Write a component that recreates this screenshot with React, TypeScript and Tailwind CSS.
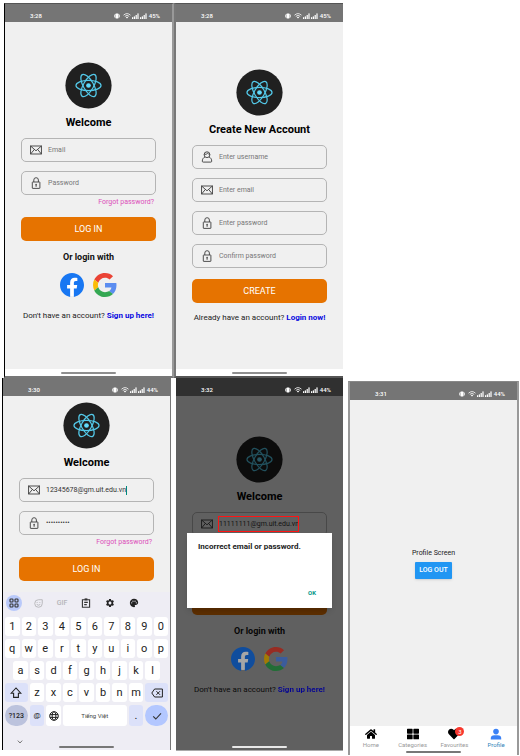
import type { ReactNode } from "react";
import { FaHeart, FaHome, FaThLarge } from "react-icons/fa";
import { MdPalette, MdSettings } from "react-icons/md";

type IconName = "mail" | "lock" | "user";

function StatusBar({ time, battery, dark = false }: { time: string; battery: string; dark?: boolean }) {
  return (
    <header
      className={`flex h-[18px] shrink-0 items-center justify-between pl-[25px] pr-3 pt-[5px] text-[6px] leading-[8px] font-medium text-white ${dark ? "bg-[#303030]" : "bg-[#757575]"}`}
    >
      <span>{time}</span>
      <span className="flex items-center gap-px">
        <svg viewBox="0 0 6 6" className="mr-[2px] size-[6px]" fill="currentColor" aria-hidden="true">
          <rect x="1.4" y="0.4" width="3.2" height="5.2" rx="0.8" />
          <rect x="0.3" y="1.6" width="0.7" height="2.8" />
          <rect x="5" y="1.6" width="0.7" height="2.8" />
        </svg>
        <svg viewBox="0 0 8 6" className="h-[6px] w-[8px]" fill="none" stroke="currentColor" strokeWidth="0.8" aria-hidden="true">
          <path d="M0.5 2.2Q4-1 7.5 2.2M1.8 3.4Q4 1.4 6.2 3.4" />
          <path d="M2.8 4.2L4 5.6 5.2 4.2Q4 3.2 2.8 4.2z" fill="currentColor" stroke="none" />
        </svg>
        <Signal />
        <Signal />
        <span className="pl-px">{battery}</span>
      </span>
    </header>
  );
}

function Signal() {
  return (
    <svg viewBox="0 0 7 6" className="h-[6px] w-[7px]" fill="currentColor" aria-hidden="true">
      <rect x="0" y="4.2" width="1.2" height="1.8" />
      <rect x="1.8" y="3.4" width="1.2" height="2.6" />
      <rect x="3.6" y="2" width="1.2" height="4" />
      <rect x="5.4" y="0.4" width="1.2" height="5.6" />
    </svg>
  );
}

function HomeIndicator({ tone = "bg-[#8f8f8f]" }: { tone?: string }) {
  return <div className={`mx-auto h-[2px] w-1/3 rounded-full ${tone}`} />;
}

function Logo() {
  return (
    <svg viewBox="0 0 48 48" className="size-[47px] shrink-0" role="img" aria-label="React">
      <circle cx="24" cy="24" r="23.6" fill="#202020" />
      <g fill="none" stroke="#53c8e8" strokeWidth="1.25">
        <ellipse cx="24" cy="24" rx="12.8" ry="5.2" />
        <ellipse cx="24" cy="24" rx="12.8" ry="5.2" transform="rotate(60 24 24)" />
        <ellipse cx="24" cy="24" rx="12.8" ry="5.2" transform="rotate(120 24 24)" />
      </g>
      <circle cx="24" cy="24" r="2.4" fill="#61dafb" />
    </svg>
  );
}

function FieldIcon({ name }: { name: IconName }) {
  return (
    <svg viewBox="0 0 12 12" className="size-3 shrink-0" fill="none" stroke="#3c3c3c" strokeWidth="0.9" aria-hidden="true">
      {name === "mail" && (
        <>
          <rect x="0.6" y="2" width="10.8" height="8" />
          <path d="M0.6 2L6 6.8 11.4 2M0.6 10L4.4 5.4M11.4 10L7.6 5.4" />
        </>
      )}
      {name === "lock" && (
        <>
          <rect x="2.3" y="5" width="7.6" height="6.4" rx="0.4" />
          <path d="M3.8 5V3a2.3 2.3 0 0 1 4.6 0V5M6.1 8v1.8" />
          <circle cx="6.1" cy="7.6" r="0.8" fill="#3c3c3c" stroke="none" />
        </>
      )}
      {name === "user" && (
        <>
          <circle cx="6" cy="3.7" r="2.9" />
          <path d="M3.3 3.4Q5.6 3.6 6.6 2.2 7.4 3.4 8.7 3.5M4 5.9C2.2 6.8 1.3 8.2 1.3 10.2q0 .9.9.9h7.6q.9 0 .9-.9C10.7 8.2 9.8 6.8 8 5.9" />
        </>
      )}
    </svg>
  );
}

function Field({
  icon,
  label,
  placeholder,
  value,
  caret = false,
}: {
  icon: IconName;
  label: string;
  placeholder?: string;
  value?: string;
  caret?: boolean;
}) {
  return (
    <label className="flex h-6 items-center gap-[6px] rounded-[5px] border border-[#b4b4b4] px-2">
      <FieldIcon name={icon} />
      <input
        type={icon === "lock" ? "password" : "text"}
        aria-label={label}
        placeholder={placeholder}
        defaultValue={value}
        className={`min-w-0 bg-transparent text-[7px] leading-[10px] text-[#333] outline-none placeholder:text-[#777] ${caret ? "field-sizing-content" : "flex-1"}`}
      />
      {caret && <span className="-ml-[6px] h-[9px] w-px bg-[#00897b]" />}
    </label>
  );
}

function PrimaryButton({ children }: { children: ReactNode }) {
  return (
    <button type="button" className="h-6 w-full rounded-[5px] bg-[#e67300] text-[9px] leading-3 text-white">
      {children}
    </button>
  );
}

function LoginForm({ email, password, caret }: { email?: string; password?: string; caret?: boolean }) {
  return (
    <>
      <Logo />
      <h1 className="mt-[6px] text-[11px] leading-4 font-bold text-black">Welcome</h1>
      <form className="mt-[7px] flex w-full flex-col gap-[9px]">
        <Field icon="mail" label="Email" placeholder="Email" value={email} caret={caret} />
        <Field icon="lock" label="Password" placeholder="Password" value={password} />
      </form>
      <a href="#forgot" className="mt-[2px] mr-[2px] self-end text-[7px] leading-[10px] text-[#dc4fba]">
        Forgot password?
      </a>
      <div className="mt-2 w-full">
        <PrimaryButton>LOG IN</PrimaryButton>
      </div>
    </>
  );
}

function SocialLogin({ behindDialog = false }: { behindDialog?: boolean }) {
  const layer = behindDialog ? "relative z-10 brightness-[.65]" : "";
  return (
    <>
      <h2 className="mt-[10px] text-[9px] leading-3 font-bold text-[#111]">Or login with</h2>
      <div className={`mt-[10px] flex gap-[9px] ${layer}`}>
        <button type="button" aria-label="Log in with Facebook">
          <svg viewBox="0 0 24 24" className="size-6">
            <circle cx="12" cy="12" r="11" fill="#fff" />
            <path
              fill="#1877f2"
              d="M24 12.073c0-6.627-5.373-12-12-12s-12 5.373-12 12c0 5.99 4.388 10.954 10.125 11.854v-8.385H7.078v-3.47h3.047V9.43c0-3.007 1.792-4.669 4.533-4.669 1.312 0 2.686.235 2.686.235v2.953H15.83c-1.491 0-1.956.925-1.956 1.874v2.25h3.328l-.532 3.47h-2.796v8.385C19.612 23.027 24 18.062 24 12.073z"
            />
          </svg>
        </button>
        <button type="button" aria-label="Log in with Google">
          <svg viewBox="0 0 48 48" className="size-6">
            <path fill="#ea4335" d="M24 9.5c3.54 0 6.71 1.22 9.21 3.6l6.85-6.85C35.9 2.38 30.47 0 24 0 14.62 0 6.51 5.38 2.56 13.22l7.98 6.19C12.43 13.72 17.74 9.5 24 9.5z" />
            <path fill="#5b8df0" d="M46.98 24.55c0-1.57-.15-3.09-.38-4.55H24v9.02h12.94c-.58 2.96-2.26 5.48-4.78 7.18l7.73 6c4.51-4.18 7.09-10.36 7.09-17.65z" />
            <path fill="#fbbc05" d="M10.53 28.59c-.48-1.45-.76-2.99-.76-4.59s.27-3.14.76-4.59l-7.98-6.19C.92 16.46 0 20.12 0 24c0 3.88.92 7.54 2.56 10.78l7.97-6.19z" />
            <path fill="#34a853" d="M24 48c6.48 0 11.93-2.13 15.89-5.81l-7.73-6c-2.15 1.45-4.92 2.3-8.16 2.3-6.26 0-11.57-4.22-13.47-9.91l-7.98 6.19C6.51 42.62 14.62 48 24 48z" />
          </svg>
        </button>
      </div>
      <p className="mt-[13px] text-[8px] leading-3 whitespace-nowrap text-[#222]">
        Don't have an account?{" "}
        <a href="#signup" className={`font-bold text-[#0808e0] ${layer}`}>
          Sign up here!
        </a>
      </p>
    </>
  );
}

function LoginScreen() {
  return (
    <section className="ml-px flex flex-col border-t border-r-2 border-b-2 border-l border-t-[#555] border-r-[#999] border-b-[#777] border-l-black bg-[#f0f0f0]">
      <StatusBar time="3:28" battery="45%" />
      <main className="flex flex-1 flex-col items-center px-4 pt-10">
        <LoginForm />
        <SocialLogin />
      </main>
      <footer className="bg-white pt-[3px] pb-[2px]">
        <HomeIndicator />
      </footer>
    </section>
  );
}

function RegisterScreen() {
  return (
    <section className="mr-1 flex flex-col border-t border-b-2 border-l-2 border-t-[#555] border-b-[#555] border-l-[#777] bg-[#f0f0f0]">
      <StatusBar time="3:28" battery="45%" />
      <main className="flex flex-1 flex-col items-center px-4 pt-[47px]">
        <Logo />
        <h1 className="mt-[6px] text-[11px] leading-4 font-bold whitespace-nowrap text-black">Create New Account</h1>
        <form className="mt-[7px] flex w-full flex-col gap-[9px]">
          <Field icon="user" label="Username" placeholder="Enter username" />
          <Field icon="mail" label="Email" placeholder="Enter email" />
          <Field icon="lock" label="Password" placeholder="Enter password" />
          <Field icon="lock" label="Confirm password" placeholder="Confirm password" />
        </form>
        <div className="mt-[9px] w-full">
          <PrimaryButton>CREATE</PrimaryButton>
        </div>
        <p className="mt-[9px] text-[8px] leading-3 whitespace-nowrap text-[#222]">
          Already have an account?{" "}
          <a href="#login" className="font-bold text-[#0808e0]">
            Login now!
          </a>
        </p>
      </main>
      <footer className="bg-white pt-[3px] pb-[2px]">
        <HomeIndicator />
      </footer>
    </section>
  );
}

const letterKey = "col-span-2 flex items-center justify-center rounded-[3px] bg-white";
const tintKey = "flex items-center justify-center rounded-[3px] bg-[#dce1f9]";

function KeyRow({ children, tall = false }: { children: ReactNode; tall?: boolean }) {
  return (
    <div
      className={`grid grid-cols-[repeat(20,minmax(0,1fr))] gap-x-[2px] text-[11px] leading-3 text-[#222] ${tall ? "h-[21px]" : "h-[19px]"}`}
    >
      {children}
    </div>
  );
}

function Keyboard() {
  return (
    <div className="flex flex-col bg-[#eeedf4] px-[2px] pt-[3px] pb-[2px] text-[#222]">
      <div className="flex h-4 items-center gap-2 pl-px">
        <button type="button" aria-label="Tools" className="flex size-4 items-center justify-center rounded-full bg-[#b9c9fa]">
          <svg viewBox="0 0 10 10" className="size-[10px]" fill="none" stroke="#333" strokeWidth="1.1">
            <rect x="1" y="1" width="3" height="3" rx="0.8" />
            <rect x="6" y="1" width="3" height="3" rx="0.8" />
            <rect x="1" y="6" width="3" height="3" rx="0.8" />
            <rect x="6" y="6" width="3" height="3" rx="0.8" />
          </svg>
        </button>
        <button type="button" aria-label="Stickers" className="flex size-4 items-center justify-center">
          <svg viewBox="0 0 10 10" className="size-[9px]" fill="none" stroke="#b4b4b8" strokeWidth="1">
            <path d="M5 .8A4.2 4.2 0 1 0 9.2 5V.8zM3 6q2 1.8 4 0" />
            <path d="M3.5 3.4v1M6.5 3.4v1" />
          </svg>
        </button>
        <button type="button" className="w-4 text-center text-[7px] leading-[10px] font-medium text-[#b4b4b8]">
          GIF
        </button>
        <button type="button" aria-label="Clipboard" className="flex size-4 items-center justify-center">
          <svg viewBox="0 0 10 10" className="size-[10px]" fill="none" stroke="#333" strokeWidth="1.1">
            <path d="M1.4 1.8h7.2v7.4H1.4zM3.2 4.4h3.6M3.2 6.6h2.6" />
            <rect x="3.6" y="0.4" width="2.8" height="2" fill="#333" stroke="none" />
          </svg>
        </button>
        <button type="button" aria-label="Settings" className="flex size-4 items-center justify-center">
          <MdSettings className="size-[10px]" />
        </button>
        <button type="button" aria-label="Themes" className="flex size-4 items-center justify-center">
          <MdPalette className="size-[10px]" />
        </button>
      </div>
      <div className="mt-[6px] flex flex-col gap-[3px]">
        <KeyRow>
          {[..."1234567890"].map((k) => (
            <button type="button" key={k} className={letterKey}>
              {k}
            </button>
          ))}
        </KeyRow>
        <KeyRow>
          {[..."qwertyuiop"].map((k) => (
            <button type="button" key={k} className={letterKey}>
              {k}
            </button>
          ))}
        </KeyRow>
        <KeyRow>
          <span />
          {[..."asdfghjkl"].map((k) => (
            <button type="button" key={k} className={letterKey}>
              {k}
            </button>
          ))}
          <span />
        </KeyRow>
        <KeyRow>
          <button type="button" aria-label="Shift" className={`col-span-3 ${tintKey}`}>
            <svg viewBox="0 0 12 12" className="size-3" fill="none" stroke="#222" strokeWidth="1.1">
              <path d="M6 1L1.2 6.2H3.6V10.4H8.4V6.2H10.8z" />
            </svg>
          </button>
          {[..."zxcvbnm"].map((k) => (
            <button type="button" key={k} className={letterKey}>
              {k}
            </button>
          ))}
          <button type="button" aria-label="Backspace" className={`col-span-3 ${tintKey}`}>
            <svg viewBox="0 0 12 12" className="size-3" fill="none" stroke="#222" strokeWidth="1">
              <path d="M3.6 2H11.4V10H3.6L.8 6zM5.4 4.2L9 7.8M9 4.2L5.4 7.8" />
            </svg>
          </button>
        </KeyRow>
        <KeyRow tall>
          <button type="button" className="col-span-3 flex items-center justify-center rounded-full bg-[#bcc3dd] text-[7px] font-medium">
            ?123
          </button>
          <button type="button" className={`col-span-2 text-[8px] ${tintKey}`}>
            @
          </button>
          <button type="button" aria-label="Language" className={letterKey}>
            <svg viewBox="0 0 10 10" className="size-[10px]" fill="none" stroke="#222" strokeWidth="1">
              <circle cx="5" cy="5" r="4.3" />
              <ellipse cx="5" cy="5" rx="1.9" ry="4.3" />
              <path d="M1 3.6H9M1 6.4H9" />
            </svg>
          </button>
          <button type="button" className="col-span-8 flex items-center justify-center rounded-[3px] bg-white text-[6px] text-[#444]">
            Tiếng Việt
          </button>
          <button type="button" className={`col-span-2 ${tintKey}`}>
            .
          </button>
          <button type="button" aria-label="Done" className="col-span-3 flex items-center justify-center rounded-full bg-[#b3c7ff]">
            <svg viewBox="0 0 10 10" className="size-[10px]" fill="none" stroke="#333" strokeWidth="1.1">
              <path d="M1.2 5.4L3.8 8 9 2.4" />
            </svg>
          </button>
        </KeyRow>
      </div>
      <div className="mt-[11px] flex h-[9px] items-center pl-3">
        <button type="button" aria-label="Hide keyboard">
          <svg viewBox="0 0 6 4" className="h-1 w-[6px]" fill="none" stroke="#777" strokeWidth="1">
            <path d="M.8.6L3 3 5.2.6" />
          </svg>
        </button>
      </div>
      <HomeIndicator tone="bg-[#777]" />
    </div>
  );
}

function TypingScreen() {
  return (
    <section className="mr-[3px] -ml-px flex flex-col self-start border-r border-l border-r-[#777] border-l-black bg-[#f0f0f0]">
      <StatusBar time="3:30" battery="44%" />
      <main className="flex flex-col items-center px-4 pt-[6px] pb-[11px]">
        <LoginForm email="12345678@gm.uit.edu.vn" password="1234567890" caret />
      </main>
      <Keyboard />
    </section>
  );
}

function ErrorScreen() {
  return (
    <section className="relative mr-1 mb-1 ml-[2px] flex flex-col border-b border-b-[#aaa] bg-[#f0f0f0]">
      <StatusBar time="3:32" battery="44%" dark />
      <main className="flex flex-1 flex-col items-center px-4 pt-10">
        <LoginForm email="11111111@gm.uit.edu.vn" password="1234567890" />
        <SocialLogin behindDialog />
      </main>
      <div className="absolute inset-x-0 top-[18px] bottom-0 bg-black/60" />
      <footer className="relative pt-[3px] pb-[2px]">
        <HomeIndicator tone="bg-[#e8e8e8]" />
      </footer>
      <div className="absolute top-[138px] left-[42px] h-4 w-[81px] border border-[#ff1414]" />
      <div
        role="alertdialog"
        aria-label="Login error"
        className="absolute inset-x-[11px] top-[155px] flex h-[75px] flex-col justify-between bg-white px-[11px] pt-2 pb-[9px] shadow-md"
      >
        <p className="text-[8px] leading-3 font-bold text-[#222]">Incorrect email or password.</p>
        <button type="button" className="mr-[5px] self-end text-[6px] leading-3 font-bold text-[#009688]">
          OK
        </button>
      </div>
    </section>
  );
}

function Tab({ label, icon, active = false }: { label: string; icon: ReactNode; active?: boolean }) {
  return (
    <a
      href={`#${label.toLowerCase()}`}
      className={`flex flex-1 flex-col items-center gap-px text-[6px] leading-[8px] ${active ? "text-[#2f7fb8]" : "text-[#999]"}`}
    >
      {icon}
      <span>{label}</span>
    </a>
  );
}

function ProfileScreen() {
  return (
    <section className="mt-[3px] ml-px flex flex-col border-x-2 border-t border-x-[#999] border-t-[#888] bg-[#f0f0f0]">
      <StatusBar time="3:31" battery="44%" />
      <main className="flex flex-1 flex-col items-center justify-center gap-1">
        <p className="text-[7px] leading-[10px] text-[#222]">Profile Screen</p>
        <button type="button" className="h-[17px] rounded-[1px] bg-[#2196f3] px-1 text-[7px] leading-[10px] font-medium text-white shadow-sm">
          LOG OUT
        </button>
      </main>
      <nav className="bg-white pt-[2px] pb-[2px]">
        <div className="flex">
          <Tab label="Home" icon={<FaHome className="size-3 text-black" />} />
          <Tab label="Categories" icon={<FaThLarge className="size-3 text-black" />} />
          <Tab
            label="Favourites"
            icon={
              <span className="relative block h-3">
                <FaHeart className="size-3 text-black" />
                <span className="absolute -top-px left-[7px] size-[9px] rounded-full bg-[#f8382e] text-center text-[6px] leading-[9px] text-white">
                  3
                </span>
              </span>
            }
          />
          <Tab
            label="Profile"
            active
            icon={
              <svg viewBox="0 0 12 12" className="size-3" fill="#3b82f6" aria-hidden="true">
                <circle cx="6" cy="3.6" r="2.8" />
                <path d="M.8 11.4V10Q.8 7.4 4.4 7.2h3.2Q11.2 7.4 11.2 10v1.4z" />
              </svg>
            }
          />
        </div>
        <div className="mt-[2px]">
          <HomeIndicator tone="bg-[#777]" />
        </div>
      </nav>
    </section>
  );
}

export default function App() {
  return (
    <div className="min-h-screen bg-white pt-[3px] pr-px pl-[3px] font-[Roboto,sans-serif]">
      <div className="grid grid-cols-[171fr_173fr_172fr] grid-rows-[375px_minmax(377px,auto)]">
        <LoginScreen />
        <RegisterScreen />
        <div />
        <TypingScreen />
        <ErrorScreen />
        <ProfileScreen />
      </div>
    </div>
  );
}
